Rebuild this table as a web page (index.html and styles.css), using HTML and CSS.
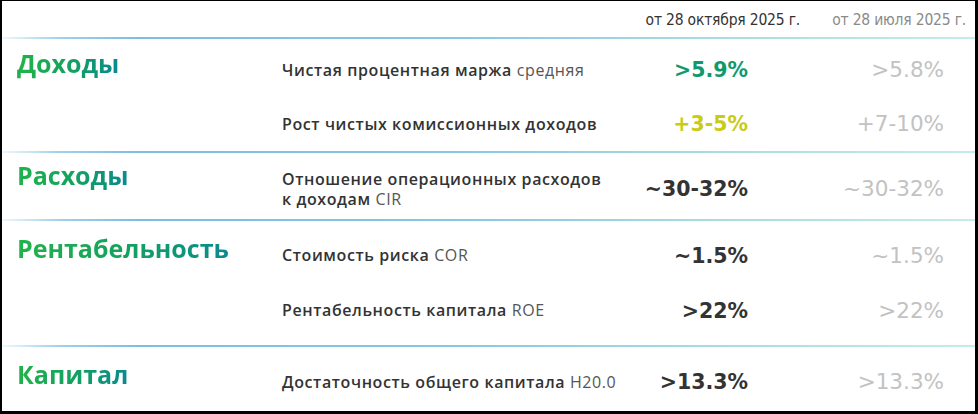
FILE: index.html
```html
<!DOCTYPE html>
<html lang="ru">
<head>
<meta charset="utf-8">
<link rel="stylesheet" href="styles.css">
</head>
<body>
<div class="frame">
  <div class="head">
    <span class="date">от 28 октября 2025 г.</span>
    <span class="date date--old">от 28 июля 2025 г.</span>
  </div>
  <div class="rule"></div>

  <section class="sec sec--income">
    <h2 class="title"><span>Доходы</span></h2>
    <div class="rows">
      <div class="row">
        <div class="desc"><b>Чистая процентная маржа</b> средняя</div>
        <div class="val val--green">&gt;5.9%</div>
        <div class="old">&gt;5.8%</div>
      </div>
      <div class="row">
        <div class="desc"><b>Рост чистых комиссионных доходов</b></div>
        <div class="val val--lime">+3-5%</div>
        <div class="old">+7-10%</div>
      </div>
    </div>
  </section>
  <div class="rule"></div>

  <section class="sec sec--cost">
    <h2 class="title"><span>Расходы</span></h2>
    <div class="rows">
      <div class="row row--tall">
        <div class="desc desc--two"><b>Отношение операционных расходов</b><br><b>к доходам</b> CIR</div>
        <div class="val">~30-32%</div>
        <div class="old">~30-32%</div>
      </div>
    </div>
  </section>
  <div class="rule"></div>

  <section class="sec sec--profit">
    <h2 class="title"><span>Рентабельность</span></h2>
    <div class="rows">
      <div class="row">
        <div class="desc"><b>Стоимость риска</b> COR</div>
        <div class="val">~1.5%</div>
        <div class="old">~1.5%</div>
      </div>
      <div class="row">
        <div class="desc"><b>Рентабельность капитала</b> ROE</div>
        <div class="val">&gt;22%</div>
        <div class="old">&gt;22%</div>
      </div>
    </div>
  </section>
  <div class="rule"></div>

  <section class="sec sec--capital">
    <h2 class="title"><span>Капитал</span></h2>
    <div class="rows">
      <div class="row">
        <div class="desc"><b>Достаточность общего капитала</b> Н20.0</div>
        <div class="val">&gt;13.3%</div>
        <div class="old">&gt;13.3%</div>
      </div>
    </div>
  </section>
</div>
</body>
</html>
```

FILE: styles.css
```css
* { box-sizing: border-box; }
html, body { margin: 0; padding: 0; background: #fff; }

.frame {
  width: 978px;
  height: 414px;
  border-style: solid;
  border-color: #000;
  border-width: 1px 3px 3px 2px;
  background: #fff;
  font-family: "Open Sans", "Noto Sans", sans-serif;
  color: #333;
  overflow: hidden;
}

.head {
  height: 36px;
  display: flex;
  justify-content: flex-end;
  align-items: center;
  gap: 30px;
  padding-right: 9px;
  padding-top: 2px;
}
.date {
  width: 161px;
  text-align: right;
  font-family: "DejaVu Sans", sans-serif;
  font-stretch: condensed;
  font-size: 15.5px;
  letter-spacing: -0.2px;
  color: #333;
  white-space: nowrap;
}
.date--old { width: 136px; color: #8a8a8a; }

.rule {
  height: 2px;
  background: linear-gradient(90deg, #eef7fb 0%, #9fd0ea 6%, #7dbde3 14%, #86c6e2 45%, #a9dde0 75%, #c4ece8 100%);
}

.sec {
  display: flex;
  padding-left: 15px;
  padding-right: 31px;
}
.sec--income { height: 112px; padding-top: 4px; }
.sec--cost { height: 66px; padding-top: 8px; }
.sec--profit { height: 124px; padding-top: 7px; }
.sec--capital { height: 64px; padding-top: 8px; }

.title {
  width: 265px;
  flex: none;
  margin: 0;
  font-size: 25px;
  font-weight: 700;
  line-height: 34px;
  padding-top: 3px;
}
.sec--cost .title { padding-top: 0; margin-top: -3px; }
.sec--profit .title { padding-top: 3px; }
.sec--capital .title { padding-top: 2px; }
.title span {
  background: linear-gradient(90deg, #22b24a 0%, #14a25e 50%, #0a8a90 100%);
  -webkit-background-clip: text;
  background-clip: text;
  color: transparent;
}

.rows { flex: 1; display: flex; flex-direction: column; }
.row {
  height: 54px;
  display: grid;
  grid-template-columns: 340px 126px 196px;
  align-items: center;
}
.sec--profit .row { height: 55px; }
.row--tall { height: 56px; }

.desc {
  font-size: 16px;
  line-height: 19px;
  letter-spacing: 0.6px;
  color: #555;
  white-space: nowrap;
}
.desc--two { line-height: 20px; }
.desc b { font-weight: 600; color: #333; }

.val, .old {
  text-align: right;
  font-family: "DejaVu Sans", "Open Sans", sans-serif;
  line-height: 28px;
  white-space: nowrap;
}
.val { font-size: 20.5px; font-weight: 700; color: #333; }
.val--green { color: #0f9a6c; }
.val--lime { color: #c9cc12; }
.old { font-size: 21.5px; font-weight: 400; color: #c2c2c2; }
```
